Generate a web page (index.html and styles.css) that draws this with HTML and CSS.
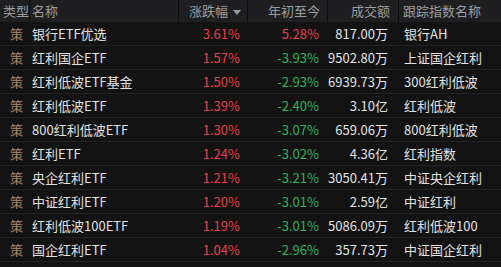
FILE: index.html
```html
<!DOCTYPE html>
<html lang="zh-CN">
<head>
<meta charset="utf-8">
<link rel="stylesheet" href="styles.css">
</head>
<body>
<div class="table">
  <div class="row head">
    <div class="c type">类型</div>
    <div class="c name">名称</div>
    <div class="c chg">涨跌幅<span class="tri"></span></div>
    <div class="c ytd">年初至今</div>
    <div class="c amt">成交额</div>
    <div class="c idx">跟踪指数名称</div>
  </div>
  <div class="row"><div class="c type t">策</div><div class="c name">银行ETF优选</div><div class="c chg up">3.61%</div><div class="c ytd up">5.28%</div><div class="c amt">817.00万</div><div class="c idx">银行AH</div></div>
  <div class="row"><div class="c type t">策</div><div class="c name">红利国企ETF</div><div class="c chg up">1.57%</div><div class="c ytd dn">-3.93%</div><div class="c amt">9502.80万</div><div class="c idx">上证国企红利</div></div>
  <div class="row"><div class="c type t">策</div><div class="c name">红利低波ETF基金</div><div class="c chg up">1.50%</div><div class="c ytd dn">-2.93%</div><div class="c amt">6939.73万</div><div class="c idx">300红利低波</div></div>
  <div class="row"><div class="c type t">策</div><div class="c name">红利低波ETF</div><div class="c chg up">1.39%</div><div class="c ytd dn">-2.40%</div><div class="c amt">3.10亿</div><div class="c idx">红利低波</div></div>
  <div class="row"><div class="c type t">策</div><div class="c name">800红利低波ETF</div><div class="c chg up">1.30%</div><div class="c ytd dn">-3.07%</div><div class="c amt">659.06万</div><div class="c idx">800红利低波</div></div>
  <div class="row"><div class="c type t">策</div><div class="c name">红利ETF</div><div class="c chg up">1.24%</div><div class="c ytd dn">-3.02%</div><div class="c amt">4.36亿</div><div class="c idx">红利指数</div></div>
  <div class="row"><div class="c type t">策</div><div class="c name">央企红利ETF</div><div class="c chg up">1.21%</div><div class="c ytd dn">-3.21%</div><div class="c amt">3050.41万</div><div class="c idx">中证央企红利</div></div>
  <div class="row"><div class="c type t">策</div><div class="c name">中证红利ETF</div><div class="c chg up">1.20%</div><div class="c ytd dn">-3.01%</div><div class="c amt">2.59亿</div><div class="c idx">中证红利</div></div>
  <div class="row"><div class="c type t">策</div><div class="c name">红利低波100ETF</div><div class="c chg up">1.19%</div><div class="c ytd dn">-3.01%</div><div class="c amt">5086.09万</div><div class="c idx">红利低波100</div></div>
  <div class="row"><div class="c type t">策</div><div class="c name">国企红利ETF</div><div class="c chg up">1.04%</div><div class="c ytd dn">-2.96%</div><div class="c amt">357.73万</div><div class="c idx">中证国企红利</div></div>
</div>
</body>
</html>
```
FILE: styles.css
```css
html, body {
  margin: 0;
  padding: 0;
  background: #131314;
  width: 501px;
  height: 267px;
  overflow: hidden;
}
.table {
  font-family: "Noto Sans CJK SC", "Noto Sans", sans-serif;
  font-size: 13px;
  color: #e2e2e2;
}
.row {
  display: flex;
  height: 23px;
  line-height: 23px;
  border-bottom: 1px solid #242426;
}
.row.head {
  height: 22px;
  line-height: 22px;
  background: #1f1f21;
  border-bottom: none;
  color: #9c9c9e;
}
.c {
  box-sizing: border-box;
  white-space: nowrap;
  overflow: hidden;
}
.head .c {
  border-left: 1px solid #0e0e0f;
}
.head .c.type { border-left: none; }
.type { width: 29px; padding-left: 3px; }
.type.t { padding-left: 10px; color: #a9876a; }
.name { width: 149px; padding-left: 3px; }
.head .name { padding-left: 2px; }
.chg { width: 69px; text-align: right; padding-right: 7px; }
.head .chg { padding-right: 6px; }
.ytd { width: 80px; text-align: right; padding-right: 8px; }
.head .ytd { padding-right: 7px; }
.amt { width: 71px; text-align: right; padding-right: 10px; }
.head .amt { padding-right: 8px; }
.idx { flex: 1; padding-left: 6px; }
.head .idx { padding-left: 4px; }
.tri {
  display: inline-block;
  width: 0;
  height: 0;
  margin-left: 5px;
  vertical-align: middle;
  border-left: 4px solid transparent;
  border-right: 4px solid transparent;
  border-top: 5px solid #9c9c9e;
}
.up { color: #e5404a; }
.dn { color: #2fb45a; }
```
